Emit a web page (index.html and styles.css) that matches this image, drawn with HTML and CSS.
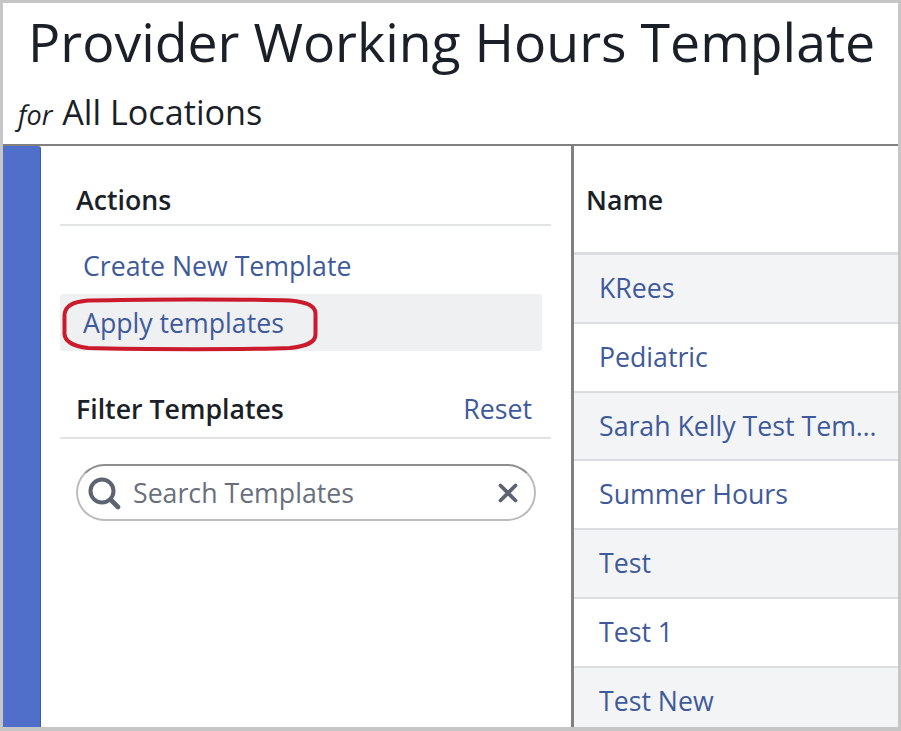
FILE: index.html
```html
<!DOCTYPE html>
<html lang="en">
<head>
    <meta charset="UTF-8">
    <meta name="viewport" content="width=device-width, initial-scale=1.0">
    <title>Provider Working Hours Template</title>
    <link rel="stylesheet" href="styles.css">
</head>
<body>
    <div class="frame">
        <header class="header">
            <h1 class="title">Provider Working Hours Template</h1>
            <div class="subtitle"><em>for</em> All Locations</div>
        </header>
        <div class="main">
            <div class="strip"></div>
            <aside class="panel">
                <div class="section-head">
                    <h2>Actions</h2>
                </div>
                <ul class="actions">
                    <li><a href="#">Create New Template</a></li>
                    <li class="active">
                        <a href="#">Apply templates</a>
                        <svg class="callout" width="262" height="60" viewBox="0 0 262 60" fill="none" stroke="#cb1a2b" stroke-width="4">
                            <path d="M28 6.5C80 5 190 5 230 6.5C248 8 255 12 255.500 19V41C255 48 248 52 230 54C190 55.500 80 55.500 28 54C12 52 5 47 4.500 40V21C5 12 12 8 28 6.500Z"/>
                        </svg>
                    </li>
                </ul>
                <div class="section-head filter-head">
                    <h2>Filter Templates</h2>
                    <a href="#">Reset</a>
                </div>
                <div class="search">
                    <svg class="search-icon" width="34" height="34" viewBox="0 0 34 34" fill="none" stroke="#5e6372" stroke-width="4" stroke-linecap="round">
                        <circle cx="15" cy="15" r="11.500"/>
                        <path d="M24 24l7 7" stroke-width="4.600"/>
                    </svg>
                    <span class="placeholder">Search Templates</span>
                    <svg class="clear-icon" width="20" height="20" viewBox="0 0 20 20" fill="none" stroke="#5e6372" stroke-width="3.800" stroke-linecap="round">
                        <path d="M2.500 2.500l15 15M17.500 2.500l-15 15"/>
                    </svg>
                </div>
            </aside>
            <section class="list">
                <div class="list-head">Name</div>
                <a class="row" href="#">KRees</a>
                <a class="row" href="#">Pediatric</a>
                <a class="row" href="#"><span class="cut">Sarah Kelly Test Template</span></a>
                <a class="row" href="#">Summer Hours</a>
                <a class="row" href="#">Test</a>
                <a class="row" href="#">Test 1</a>
                <a class="row" href="#">Test New</a>
            </section>
        </div>
    </div>
</body>
</html>
```

FILE: styles.css
```css
* {
    box-sizing: border-box;
}
body {
    margin: 0;
    font-family: "Open Sans", Arial, sans-serif;
    background: #fff;
    color: #1b1f27;
}
a {
    color: #3f5a9a;
    text-decoration: none;
}
.frame {
    width: 901px;
    height: 731px;
    border: 3px solid #c6c6c6;
    border-bottom-width: 4px;
    display: flex;
    flex-direction: column;
    overflow: hidden;
}
.header {
    height: 143px;
    border-bottom: 2px solid #808080;
    flex: none;
}
.title {
    margin: 0;
    padding: 8px 0 0 25px;
    font-size: 53.6px;
    font-weight: 400;
    line-height: 62px;
    white-space: nowrap;
}
.subtitle {
    padding: 18px 0 0 15px;
    font-size: 34.2px;
    line-height: 42px;
}
.subtitle em {
    margin-right: 1px;
    font-size: 27px;
}
.main {
    flex: 1;
    display: flex;
    min-height: 0;
}
.strip {
    width: 38px;
    flex: none;
    background: #4f6fcb;
    border-right: 1px solid #3f5aa6;
    border-top-right-radius: 3px;
}
.panel {
    width: 530px;
    flex: none;
    padding: 32px 20px 0 19px;
}
.section-head {
    display: flex;
    justify-content: space-between;
    align-items: center;
    height: 48px;
    padding: 0 19px 3px 16px;
    border-bottom: 2px solid #e2e3e5;
}
.section-head h2 {
    margin: 0;
    font-size: 26.7px;
    font-weight: 600;
}
.section-head a {
    font-size: 26.7px;
}
.actions {
    list-style: none;
    margin: 11px 9px 0 0;
    padding: 0;
}
.actions li {
    position: relative;
    height: 57px;
    padding-left: 23px;
    font-size: 26.7px;
    line-height: 57px;
}
.actions .active {
    background: #eff0f2;
    border-radius: 3px;
}
.callout {
    position: absolute;
    left: 0;
    top: 0;
}
.filter-head {
    height: 60px;
    margin-top: 28px;
    padding-bottom: 0;
}
.search {
    display: flex;
    align-items: center;
    width: 460px;
    height: 57px;
    margin: 25px 0 0 16px;
    padding: 0 16px 0 9px;
    border: 2px solid #bcbcbc;
    border-top-color: #8e8e8e;
    border-radius: 29px;
}
.placeholder {
    flex: 1;
    margin-left: 12px;
    font-size: 26.7px;
    color: #6a6f7c;
}
.list {
    flex: 1;
    min-width: 0;
    border-left: 3px solid #808080;
}
.list-head {
    height: 109px;
    padding: 34px 0 0 12px;
    font-size: 26.7px;
    font-weight: 600;
    line-height: 40px;
    border-bottom: 3px solid #dcdde0;
}
.row {
    display: block;
    height: 68.8px;
    padding-left: 25px;
    font-size: 26.7px;
    line-height: 66px;
    border-bottom: 2px solid #dcdde0;
}
.row:nth-of-type(odd) {
    background: #f3f4f6;
}
.cut {
    display: block;
    width: 288px;
    overflow: hidden;
    white-space: nowrap;
    text-overflow: ellipsis;
}
```
